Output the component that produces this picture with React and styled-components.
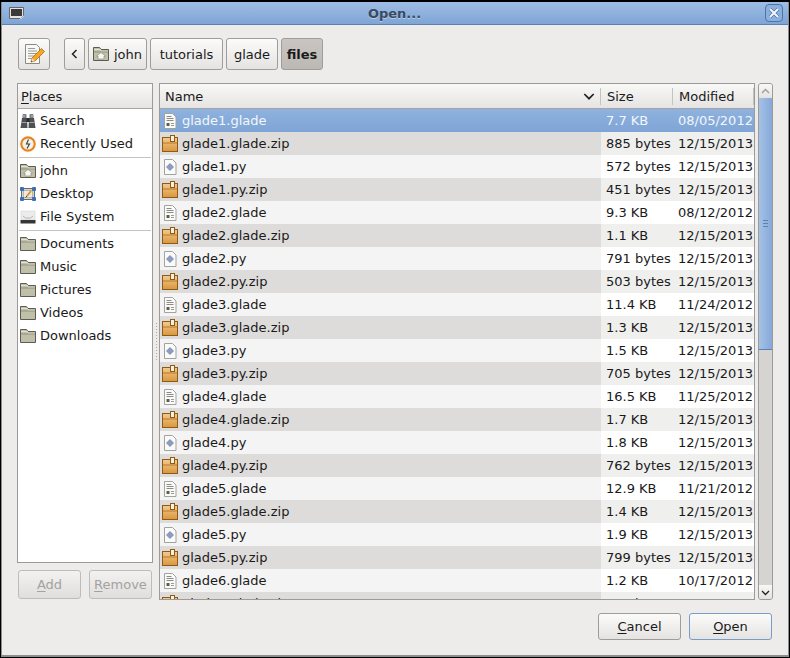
import React from 'react'
import styled, { createGlobalStyle } from 'styled-components'

const GlobalStyle = createGlobalStyle`
  html, body { margin: 0; padding: 0; background: #000; }
  * { box-sizing: border-box; }
`

const files = [
  ['glade1.glade', '7.7 KB', '08/05/2012'],
  ['glade1.glade.zip', '885 bytes', '12/15/2013'],
  ['glade1.py', '572 bytes', '12/15/2013'],
  ['glade1.py.zip', '451 bytes', '12/15/2013'],
  ['glade2.glade', '9.3 KB', '08/12/2012'],
  ['glade2.glade.zip', '1.1 KB', '12/15/2013'],
  ['glade2.py', '791 bytes', '12/15/2013'],
  ['glade2.py.zip', '503 bytes', '12/15/2013'],
  ['glade3.glade', '11.4 KB', '11/24/2012'],
  ['glade3.glade.zip', '1.3 KB', '12/15/2013'],
  ['glade3.py', '1.5 KB', '12/15/2013'],
  ['glade3.py.zip', '705 bytes', '12/15/2013'],
  ['glade4.glade', '16.5 KB', '11/25/2012'],
  ['glade4.glade.zip', '1.7 KB', '12/15/2013'],
  ['glade4.py', '1.8 KB', '12/15/2013'],
  ['glade4.py.zip', '762 bytes', '12/15/2013'],
  ['glade5.glade', '12.9 KB', '11/21/2012'],
  ['glade5.glade.zip', '1.4 KB', '12/15/2013'],
  ['glade5.py', '1.9 KB', '12/15/2013'],
  ['glade5.py.zip', '799 bytes', '12/15/2013'],
  ['glade6.glade', '1.2 KB', '10/17/2012'],
  ['glade6.glade.zip', '560 bytes', '10/17/2012'],
]

const Window = styled.div`
  width: 790px;
  height: 658px;
  display: flex;
  flex-direction: column;
  overflow: hidden;
  background: #edeceb;
  border: 1px solid #000;
  border-top-width: 2px;
  box-shadow: inset 1px 0 0 #8c8c8c, inset -1px 0 0 #8c8c8c, inset 0 -2px 0 #8c8c8c;
  font-family: 'DejaVu Sans', sans-serif;
  font-size: 13px;
  color: #1a1a1a;
`

const TitleBar = styled.div`
  height: 23px;
  flex: none;
  margin: 0 1px;
  display: flex;
  align-items: center;
  justify-content: space-between;
  padding: 0 5px 0 7px;
  background: linear-gradient(#9dbde4, #7fa5d5);
  border-bottom: 1px solid #5c82b3;
`

const TitleText = styled.span`
  color: #3a4a60;
  font-weight: bold;
  text-shadow: 0 1px 0 #b5cdeb;
`

const CloseBox = styled.div`
  width: 18px;
  height: 18px;
  border: 1px solid #4f73a3;
  border-radius: 4px;
  display: flex;
  align-items: center;
  justify-content: center;
  background: #8bb0de;
`

const Body = styled.div`
  flex: 1;
  min-height: 0;
  display: flex;
  flex-direction: column;
  padding: 13px 16px 15px 16px;
`

const PathBar = styled.div`
  display: flex;
  height: 32px;
  margin-left: 1px;
  gap: 3px;
  flex: none;
`

const Button = styled.div`
  display: flex;
  align-items: center;
  justify-content: center;
  gap: 5px;
  height: ${p => p.$h || 32}px;
  width: ${p => p.$w}px;
  flex: none;
  border: 1px solid ${p => (p.$disabled ? '#bdbcba' : p.$focus ? '#7b9cc6' : '#9e9d9b')};
  border-radius: 3px;
  background: ${p =>
    p.$active
      ? 'linear-gradient(#c9c6c2, #bcb9b5)'
      : p.$disabled
        ? 'linear-gradient(#f3f2f1, #dfdedc)'
        : 'linear-gradient(#fbfbfa, #e4e3e1)'};
  font-weight: ${p => (p.$active ? 'bold' : 'normal')};
  color: ${p => (p.$disabled ? '#a3a2a0' : '#1a1a1a')};
`

const EditButton = styled(Button)`
  margin-right: 11px;
`

const Main = styled.div`
  display: flex;
  margin-top: 13px;
  height: 517px;
  flex: none;
`

const Sidebar = styled.div`
  width: 136px;
  flex: none;
  display: flex;
  flex-direction: column;
`

const PlacesPane = styled.div`
  height: 480px;
  flex: none;
  border: 1px solid #9c9b99;
  background: #fff;
`

const HeaderCell = styled.div`
  position: relative;
  height: 25px;
  display: flex;
  align-items: center;
  justify-content: space-between;
  padding: 0 6px 0 ${p => p.$pad || 6}px;
  width: ${p => (p.$w ? p.$w + 'px' : 'auto')};
  flex: ${p => (p.$w ? 'none' : '1')};
  background: linear-gradient(#f8f8f7, #e5e4e2);
  border-bottom: 1px solid #a6a5a3;
  &::after {
    content: '';
    display: ${p => (p.$sep ? 'block' : 'none')};
    position: absolute;
    right: 0;
    top: 4px;
    bottom: 3px;
    width: 1px;
    background: #c4c3c1;
  }
`

const PlacesHeader = styled(HeaderCell)`
  padding-left: 3px;
`

const Place = styled.div`
  height: 23px;
  display: flex;
  align-items: center;
  gap: 4px;
  padding-left: 2px;
`

const Divider = styled.div`
  height: 1px;
  margin: 2px 1px 1px;
  background: #c4c3c1;
`

const SideActions = styled.div`
  display: flex;
  gap: 8px;
  margin: 7px 0 0 1px;
`

const Grip = styled.div`
  width: 6px;
  flex: none;
  display: flex;
  align-items: center;
  justify-content: center;
`

const GripDots = styled.div`
  width: 3px;
  height: 40px;
  background-image: radial-gradient(circle, #a8a7a5 0.8px, transparent 1px);
  background-size: 3px 3px;
`

const FilePane = styled.div`
  width: 596px;
  flex: none;
  border: 1px solid #9c9b99;
  background: #fff;
  display: flex;
  flex-direction: column;
  overflow: hidden;
`

const HeaderRow = styled.div`
  display: flex;
  flex: none;
`

const Rows = styled.div`
  flex: 1;
  min-height: 0;
  overflow: hidden;
`

const Row = styled.div`
  height: 23px;
  display: flex;
  align-items: center;
  color: ${p => (p.$selected ? '#f2f6fb' : '#1a1a1a')};
  background: ${p =>
    p.$selected ? 'linear-gradient(#8fb2de, #7fa5d6)' : p.$alt ? '#efefee' : '#fff'};
`

const NameCell = styled.div`
  width: 441px;
  flex: none;
  height: 100%;
  display: flex;
  align-items: center;
  gap: 4px;
  padding-left: 2px;
  background: ${p => (p.$selected ? 'transparent' : p.$alt ? '#dddcdb' : '#f4f4f4')};
`

const SizeCell = styled.div`
  width: 72px;
  flex: none;
  padding-left: 5px;
  white-space: nowrap;
`

const DateCell = styled.div`
  flex: 1;
  padding-left: 5px;
  white-space: nowrap;
`

const Scrollbar = styled.div`
  width: 15px;
  margin-left: 3px;
  flex: none;
  display: flex;
  flex-direction: column;
  border: 1px solid #9c9b99;
  border-radius: 3px;
  background: #d6d4d1;
  overflow: hidden;
`

const ScrollArrow = styled.div`
  height: 14px;
  flex: none;
  display: flex;
  align-items: center;
  justify-content: center;
  background: linear-gradient(#f8f8f7, #e4e3e1);
`

const ScrollThumb = styled.div`
  height: 252px;
  flex: none;
  display: flex;
  align-items: center;
  justify-content: center;
  border-bottom: 1px solid #5c82b3;
  background: linear-gradient(90deg, #a5c2e7, #85a9d8);
`

const ThumbLines = styled.div`
  width: 5px;
  height: 7px;
  border-top: 1px solid #5c82b3;
  border-bottom: 1px solid #5c82b3;
  position: relative;
  &::after {
    content: '';
    position: absolute;
    left: 0;
    right: 0;
    top: 2px;
    height: 1px;
    background: #5c82b3;
  }
`

const ScrollSpace = styled.div`
  flex: 1;
`

const Footer = styled.div`
  display: flex;
  justify-content: flex-end;
  gap: 8px;
  margin-top: 13px;
  padding-right: 1px;
`

const Mnemonic = styled.span`
  text-decoration: underline;
  text-underline-offset: 2px;
`

function FolderIcon({ home }) {
  return (
    <svg width="16" height="16" viewBox="0 0 16 16">
      <path d="M.5 1.500h6l1.500 2h7.500v11H.500z" fill="#c0c0aa" stroke="#5c5c50" />
      <path d="M1 3.500h6.500l1 2H15" fill="none" stroke="#e2e2d4" />
      <path d="M1 6h14" stroke="#8f8f7c" />
      {home && <path d="M3.500 10l4.500-3.500 4.500 3.500h-1.500v3H5v-3z" fill="#f6f6f0" stroke="#86867a" strokeWidth=".6" />}
    </svg>
  )
}

function ZipIcon() {
  return (
    <svg width="16" height="17" viewBox="0 0 16 17">
      <defs>
        <linearGradient id="zipFill" x1="0" y1="0" x2="0" y2="1">
          <stop offset="0" stopColor="#f3cb8e" />
          <stop offset="1" stopColor="#d9963e" />
        </linearGradient>
      </defs>
      <rect x=".5" y="2.500" width="15" height="14" fill="url(#zipFill)" stroke="#8f5a14" />
      <path d="M1 8h14" stroke="#b9782a" />
      <rect x="8.500" y=".5" width="4" height="6" fill="#f8f0e0" stroke="#8f5a14" />
    </svg>
  )
}

function PageBase({ children }) {
  return (
    <svg width="16" height="16" viewBox="0 0 16 16">
      <path d="M2.500.5h8l3.500 3.500v11.500H2.500z" fill="#fafaf8" stroke="#a2a29e" />
      {children}
    </svg>
  )
}

function TextIcon() {
  return (
    <PageBase>
      <path d="M4.500 3.500h5M4.500 5.500h7M4.500 7.500h7" stroke="#8a8a86" />
      <rect x="4.500" y="10" width="3" height="3" fill="#5e5e4a" />
      <path d="M9 10.500h3M9 12.500h3" stroke="#9a9a96" />
    </PageBase>
  )
}

function PyIcon() {
  return (
    <PageBase>
      <path d="M8 4.500l3.500 3.500L8 11.500 4.500 8z" fill="#8d9cc4" stroke="#6d7ba3" strokeWidth=".7" />
    </PageBase>
  )
}

function fileIcon(name) {
  if (name.endsWith('.zip')) return <ZipIcon />
  if (name.endsWith('.py')) return <PyIcon />
  return <TextIcon />
}

function SearchIcon() {
  return (
    <svg width="16" height="16" viewBox="0 0 16 16">
      <rect x="2.500" y="1" width="4" height="5" rx="1" fill="#7c7e82" />
      <rect x="9.500" y="1" width="4" height="5" rx="1" fill="#7c7e82" />
      <path d="M2 5h5l.5 10H.5z" fill="#4e5053" />
      <path d="M9 5h5l1.500 10H8.500z" fill="#4e5053" />
      <rect x="6.500" y="5" width="3" height="4" fill="#2a2c2e" />
      <path d="M1.500 9.500h5M9.500 9.500h5" stroke="#a2a4a8" />
      <path d="M3 3h2M11 3h2" stroke="#c0c2c6" />
    </svg>
  )
}

function ClockIcon() {
  return (
    <svg width="16" height="16" viewBox="0 0 16 16">
      <circle cx="8" cy="8" r="6.700" fill="#f2f2ef" stroke="#ea861c" strokeWidth="2.200" />
      <path d="M8.500 3.500L6.500 8h3l-2.500 4.500" fill="none" stroke="#3c3c3c" strokeWidth="1.100" />
    </svg>
  )
}

function DesktopIcon() {
  return (
    <svg width="16" height="16" viewBox="0 0 16 16">
      <rect x="1.500" y="2.500" width="13" height="11" fill="#d8d6c6" stroke="#5c6a7a" />
      <rect x="3.500" y="4.500" width="9" height="7" fill="#ecebe0" stroke="#9a9a8a" strokeWidth=".6" />
      <path d="M11 5l-4 5" stroke="#e08a20" strokeWidth="1.800" />
      <path d="M7 10l-1.500 1.500" stroke="#444" />
      <rect x="0" y="1" width="4" height="4" rx="1" fill="#3b6fb5" />
      <rect x="12" y="1" width="4" height="4" rx="1" fill="#3b6fb5" />
      <rect x="0" y="11" width="4" height="4" rx="1" fill="#3b6fb5" />
      <rect x="12" y="11" width="4" height="4" rx="1" fill="#3b6fb5" />
    </svg>
  )
}

function DriveIcon() {
  return (
    <svg width="16" height="16" viewBox="0 0 16 16">
      <path d="M1 2h14v9H1z" fill="#ececec" stroke="#cfcfcf" strokeWidth=".5" />
      <path d="M3 7l2.500 2h5L13 7" fill="none" stroke="#b4b4b4" />
      <rect x="0.500" y="11" width="15" height="3.500" fill="#363636" />
    </svg>
  )
}

function EditIcon() {
  return (
    <svg width="24" height="24" viewBox="0 0 24 24">
      <path d="M3.500 2.500h11l3 3v16h-14z" fill="#f8f8f4" stroke="#8a8a86" />
      <path d="M6 6.500h7M6 9h9M6 11.500h9M6 14h7M6 16.500h5" stroke="#9a9a96" />
      <path d="M9 20l1-4L19.500 6.500l3 3L13 19z" fill="#f5a623" stroke="#b46a10" strokeWidth=".8" />
      <path d="M9 20l1-4 3 3z" fill="#f4dcb0" />
      <path d="M9 20l.4-1.600 1.200 1.200z" fill="#333" />
    </svg>
  )
}

function TitleIcon() {
  return (
    <svg width="15" height="13" viewBox="0 0 15 13">
      <path d="M.5.5h14v8l-3 3H.5z" fill="#e4e4e4" stroke="#666" />
      <rect x="2" y="2" width="11" height="7" fill="#3a3a3a" />
      <path d="M11 12.500l3.500-3.500" stroke="#eee" />
    </svg>
  )
}

function CloseIcon() {
  return (
    <svg width="12" height="12" viewBox="0 0 12 12">
      <path d="M2 2l8 8M10 2l-8 8" stroke="#4f73a3" strokeWidth="3.400" />
      <path d="M2 2l8 8M10 2l-8 8" stroke="#f4f7fb" strokeWidth="2" />
    </svg>
  )
}

function Chevron({ up, size = 9, color = '#222' }) {
  return (
    <svg width={size} height={size} viewBox="0 0 9 9">
      <path d={up ? 'M1 6l3.500-3.500L8 6' : 'M1 3l3.500 3.500L8 3'} fill="none" stroke={color} strokeWidth="1.300" />
    </svg>
  )
}

function BackIcon() {
  return (
    <svg width="7" height="10" viewBox="0 0 7 10">
      <path d="M5.500 1L1.500 5l4 4" fill="none" stroke="#222" strokeWidth="1.500" />
    </svg>
  )
}

function PlaceRow({ icon, label }) {
  return (
    <Place>
      {icon}
      <span>{label}</span>
    </Place>
  )
}

export default function App() {
  return (
    <>
      <GlobalStyle />
      <Window>
        <TitleBar>
          <TitleIcon />
          <TitleText>Open...</TitleText>
          <CloseBox>
            <CloseIcon />
          </CloseBox>
        </TitleBar>
        <Body>
          <PathBar>
            <EditButton $w={32}>
              <EditIcon />
            </EditButton>
            <Button $w={21}>
              <BackIcon />
            </Button>
            <Button $w={59}>
              <FolderIcon home />
              john
            </Button>
            <Button $w={73}>tutorials</Button>
            <Button $w={52}>glade</Button>
            <Button $w={42} $active>
              files
            </Button>
          </PathBar>
          <Main>
            <Sidebar>
              <PlacesPane>
                <PlacesHeader>
                  <span>
                    <Mnemonic>P</Mnemonic>laces
                  </span>
                </PlacesHeader>
                <PlaceRow icon={<SearchIcon />} label="Search" />
                <PlaceRow icon={<ClockIcon />} label="Recently Used" />
                <Divider />
                <PlaceRow icon={<FolderIcon home />} label="john" />
                <PlaceRow icon={<DesktopIcon />} label="Desktop" />
                <PlaceRow icon={<DriveIcon />} label="File System" />
                <Divider />
                {['Documents', 'Music', 'Pictures', 'Videos', 'Downloads'].map(label => (
                  <PlaceRow key={label} icon={<FolderIcon />} label={label} />
                ))}
              </PlacesPane>
              <SideActions>
                <Button $w={63} $h={29} $disabled>
                  <span>
                    <Mnemonic>A</Mnemonic>dd
                  </span>
                </Button>
                <Button $w={63} $h={29} $disabled>
                  <span>
                    <Mnemonic>R</Mnemonic>emove
                  </span>
                </Button>
              </SideActions>
            </Sidebar>
            <Grip>
              <GripDots />
            </Grip>
            <FilePane>
              <HeaderRow>
                <HeaderCell $w={441} $sep $pad={5}>
                  Name
                  <Chevron size={12} />
                </HeaderCell>
                <HeaderCell $w={72} $sep>
                  Size
                </HeaderCell>
                <HeaderCell $sep>Modified</HeaderCell>
              </HeaderRow>
              <Rows>
                {files.map(([name, size, date], i) => (
                  <Row key={name} $selected={i === 0} $alt={i % 2 === 1}>
                    <NameCell $selected={i === 0} $alt={i % 2 === 1}>
                      {fileIcon(name)}
                      {name}
                    </NameCell>
                    <SizeCell>{size}</SizeCell>
                    <DateCell>{date}</DateCell>
                  </Row>
                ))}
              </Rows>
            </FilePane>
            <Scrollbar>
              <ScrollArrow>
                <Chevron up color="#9a9a98" />
              </ScrollArrow>
              <ScrollThumb>
                <ThumbLines />
              </ScrollThumb>
              <ScrollSpace />
              <ScrollArrow>
                <Chevron />
              </ScrollArrow>
            </Scrollbar>
          </Main>
          <Footer>
            <Button $w={83} $h={27}>
              <span>
                <Mnemonic>C</Mnemonic>ancel
              </span>
            </Button>
            <Button $w={83} $h={27} $focus>
              <span>
                <Mnemonic>O</Mnemonic>pen
              </span>
            </Button>
          </Footer>
        </Body>
      </Window>
    </>
  )
}
